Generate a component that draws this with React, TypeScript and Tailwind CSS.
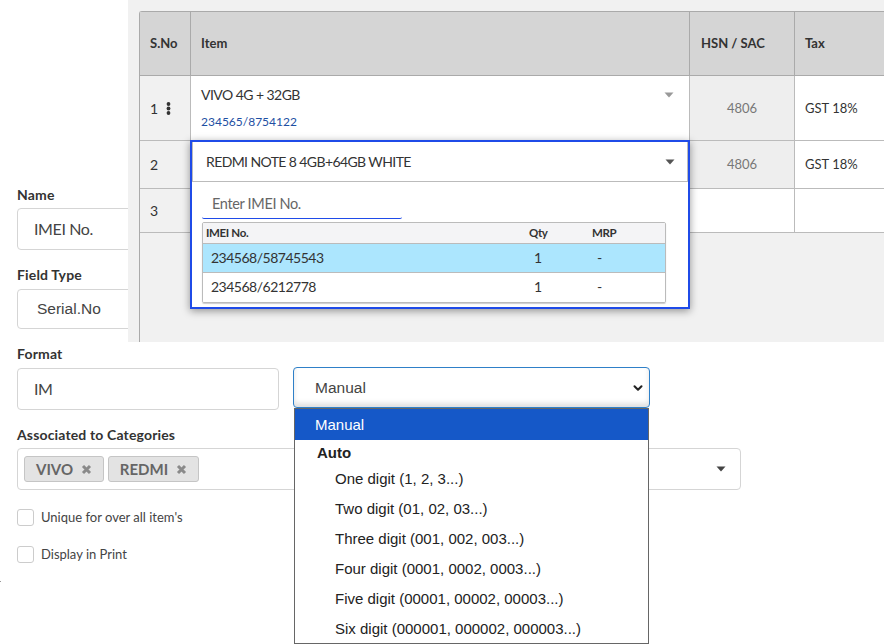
import { ChevronDown } from 'lucide-react';

const digitOptions = [
  'One digit (1, 2, 3...)',
  'Two digit (01, 02, 03...)',
  'Three digit (001, 002, 003...)',
  'Four digit (0001, 0002, 0003...)',
  'Five digit (00001, 00002, 00003...)',
  'Six digit (000001, 000002, 000003...)',
];

function Caret({ color }: { color: string }) {
  return (
    <svg width="10" height="6" viewBox="0 0 10 6" className="shrink-0">
      <path d="M0.5 0.5 H9.5 L5 5.5 Z" fill={color} />
    </svg>
  );
}

function Kebab() {
  return (
    <svg width="5" height="13" viewBox="0 0 5 13" className="shrink-0" fill="#333">
      <circle cx="2.5" cy="2" r="1.9" />
      <circle cx="2.5" cy="6.5" r="1.9" />
      <circle cx="2.5" cy="11" r="1.9" />
    </svg>
  );
}

function ChipX() {
  return (
    <svg width="11" height="11" viewBox="0 0 11 11" className="shrink-0">
      <path d="M2 2 L9 9 M9 2 L2 9" stroke="#8a8a8a" strokeWidth="3" fill="none" />
    </svg>
  );
}

function Label({ children }: { children: string }) {
  return <div className="text-[14px] font-bold leading-[18px] tracking-[0.15px] text-[#333]">{children}</div>;
}

function ItemPopup() {
  return (
    <div className="absolute left-[62px] top-[140px] h-[169px] w-[500px] border-2 border-[#1f4be8] bg-white shadow-[0_2px_8px_rgba(0,0,0,0.4)]">
      <div className="flex h-[40px] items-center justify-between border border-[#bbb] border-t-0 pl-[13px] pr-[12px] text-[14px] tracking-[-0.6px] text-[#333]">
        <span>REDMI NOTE 8 4GB+64GB WHITE</span>
        <Caret color="#555" />
      </div>
      <div className="ml-[10px] mt-[8px] h-[29px] w-[200px] rounded-b-[2px] border-b border-[#1f4be8] pl-[10px] text-[14.5px] leading-[28px] tracking-[-0.35px] text-[#666]">
        Enter IMEI No.
      </div>
      <div className="ml-[10px] mt-[3px] w-[464px] overflow-hidden rounded-[2px] border border-[#bbb] shadow-[0_1px_1px_rgba(0,0,0,0.2)]">
        <div className="flex h-[21px] items-center border-b border-[#bbb] bg-[#f4f4f6] text-[11.5px] font-bold tracking-[-0.35px] text-[#333]">
          <span className="w-[326px] pl-[3px]">IMEI No.</span>
          <span className="w-[63px]">Qty</span>
          <span>MRP</span>
        </div>
        <div className="flex h-[29px] items-center border-b border-[#bbb] bg-[#ace6fe] pb-[2px] text-[14px] tracking-[-0.5px] text-[#333]">
          <span className="w-[331px] pl-[8px]">234568/58745543</span>
          <span className="w-[63px]">1</span>
          <span>-</span>
        </div>
        <div className="flex h-[29px] items-center bg-white pb-[2px] text-[14px] tracking-[-0.5px] text-[#333]">
          <span className="w-[331px] pl-[8px]">234568/6212778</span>
          <span className="w-[63px]">1</span>
          <span>-</span>
        </div>
      </div>
    </div>
  );
}

function ItemTable() {
  return (
    <div className="relative h-[342px] w-[756px] shrink-0 overflow-hidden bg-[#f1f1f1] pl-[11px] pt-[11px]">
      <div className="h-[331px] w-[760px] rounded-tl-[3px] border-l border-t border-[#aaa] text-[13px] text-[#333]">
        <div className="flex h-[64px] items-center border-b border-[#aaa] bg-[#d5d5d5] font-bold">
          <div className="flex h-full w-[51px] items-center border-r border-[#aaa] pl-[10px]">S.No</div>
          <div className="flex h-full w-[499px] items-center border-r border-[#aaa] pl-[10px]">Item</div>
          <div className="flex h-full w-[105px] items-center border-r border-[#aaa] pl-[11px]">HSN / SAC</div>
          <div className="flex h-full items-center pl-[10px]">Tax</div>
        </div>
        <div className="flex h-[65px] border-b border-[#bbb] bg-white">
          <div className="flex w-[51px] items-center gap-[8px] border-r border-[#bbb] bg-[#f1f1f1] pl-[10px] pt-[1px] text-[14px]">
            <span>1</span>
            <Kebab />
          </div>
          <div className="w-[499px] border-r border-[#bbb] pl-[10px] pr-[10px] pt-[10px]">
            <div className="flex items-center justify-between pr-[5px]">
              <span className="text-[14px] leading-[18px] tracking-[-0.55px]">VIVO 4G + 32GB</span>
              <Caret color="#999" />
            </div>
            <div className="mt-[10px] text-[12px] leading-[16px] text-[#1e4fa3]">234565/8754122</div>
          </div>
          <div className="flex w-[105px] items-center justify-center border-r border-[#bbb] bg-[#eee] pt-[1px] text-[#777]">4806</div>
          <div className="flex items-center pl-[10px] pt-[1px]">GST 18%</div>
        </div>
        <div className="flex h-[48px] border-b border-[#bbb] bg-white">
          <div className="flex w-[51px] items-center border-r border-[#bbb] bg-[#f1f1f1] pl-[10px] text-[14px]">2</div>
          <div className="w-[499px] border-r border-[#bbb]" />
          <div className="flex w-[105px] items-center justify-center border-r border-[#bbb] bg-[#eee] text-[#777]">4806</div>
          <div className="flex items-center pl-[10px]">GST 18%</div>
        </div>
        <div className="flex h-[44px] border-b border-[#bbb] bg-white">
          <div className="flex w-[51px] items-center border-r border-[#bbb] bg-[#f1f1f1] pl-[10px] text-[14px]">3</div>
          <div className="w-[499px] border-r border-[#bbb]" />
          <div className="w-[105px] border-r border-[#bbb]" />
        </div>
      </div>
      <ItemPopup />
    </div>
  );
}

function FormatDropdown() {
  return (
    <div className="absolute left-[1px] top-[41px] h-[236px] w-[355px] overflow-hidden border border-[#666] bg-white font-['Liberation_Sans',sans-serif] text-[15px] text-[#222]">
      <div className="flex h-[31px] items-center bg-[#1558c8] pl-[20px] pt-[1px] text-white">Manual</div>
      <div className="flex h-[24px] items-end pl-[22px] font-bold">Auto</div>
      {digitOptions.map(option => (
        <div key={option} className="flex h-[30px] items-center pl-[40px]">
          {option}
        </div>
      ))}
    </div>
  );
}

function CheckRow({ label }: { label: string }) {
  return (
    <div className="flex h-[17px] items-center gap-[7px] text-[13px] text-[#444]">
      <span className="h-[17px] w-[17px] rounded-[3px] border border-[#ccc] bg-white" />
      <span>{label}</span>
    </div>
  );
}

export default function App() {
  return (
    <div className="relative h-[644px] w-[884px] overflow-hidden bg-white font-['Lato',sans-serif]">
      <div className="flex h-[342px]">
        <div className="w-[128px] shrink-0 overflow-hidden pl-[17px] pt-[186px]">
          <Label>Name</Label>
          <div className="mt-[4px] h-[42px] w-[200px] rounded-[4px] border border-[#d5d5d5] pl-[16px] text-[16px] leading-[40px] tracking-[-0.4px] text-[#444]">
            IMEI No.
          </div>
          <div className="mt-[16px]">
            <Label>Field Type</Label>
          </div>
          <div className="mt-[5px] h-[40px] w-[200px] rounded-[4px] border border-[#d5d5d5] pl-[19px] font-['Liberation_Sans',sans-serif] text-[15.5px] leading-[38px] text-[#444]">
            Serial.No
          </div>
        </div>
        <ItemTable />
      </div>

      <div className="pl-[17px] pt-[3px]">
        <Label>Format</Label>
        <div className="mt-[5px] flex items-start gap-[14px]">
          <div className="h-[42px] w-[262px] rounded-[4px] border border-[#d5d5d5] pl-[16px] text-[16px] leading-[40px] tracking-[-0.4px] text-[#444]">
            IM
          </div>
          <div className="relative -mt-px w-[357px]">
            <div className="flex h-[41px] items-center justify-between rounded-[4px] border border-[#2f80c8] pl-[21px] pr-[4px] font-['Liberation_Sans',sans-serif] text-[15.5px] text-[#444] shadow-[inset_0_-4px_5px_rgba(0,0,0,0.12)]">
              <span>Manual</span>
              <ChevronDown size={14} strokeWidth={3.5} className="text-[#222]" />
            </div>
            <FormatDropdown />
          </div>
        </div>

        <div className="mt-[16px]">
          <Label>Associated to Categories</Label>
        </div>
        <div className="mt-[4px] flex h-[42px] w-[724px] items-center justify-between rounded-[4px] border border-[#d5d5d5] pl-[6px] pr-[14px]">
          <div className="flex gap-[4px]">
            <span className="flex h-[26px] w-[80px] items-center justify-center gap-[8px] rounded-[3px] border border-[#c5c5c5] bg-[#e3e3e3] text-[15px] font-bold text-[#666]">
              VIVO <ChipX />
            </span>
            <span className="flex h-[26px] w-[91px] items-center justify-center gap-[8px] rounded-[3px] border border-[#c5c5c5] bg-[#e3e3e3] text-[15px] font-bold text-[#666]">
              REDMI <ChipX />
            </span>
          </div>
          <Caret color="#444" />
        </div>

        <div className="mt-[19px] flex flex-col gap-[20px]">
          <CheckRow label="Unique for over all item's" />
          <CheckRow label="Display in Print" />
        </div>
      </div>
      <div className="absolute left-0 top-[581px] h-px w-px bg-[#999]" />
    </div>
  );
}
